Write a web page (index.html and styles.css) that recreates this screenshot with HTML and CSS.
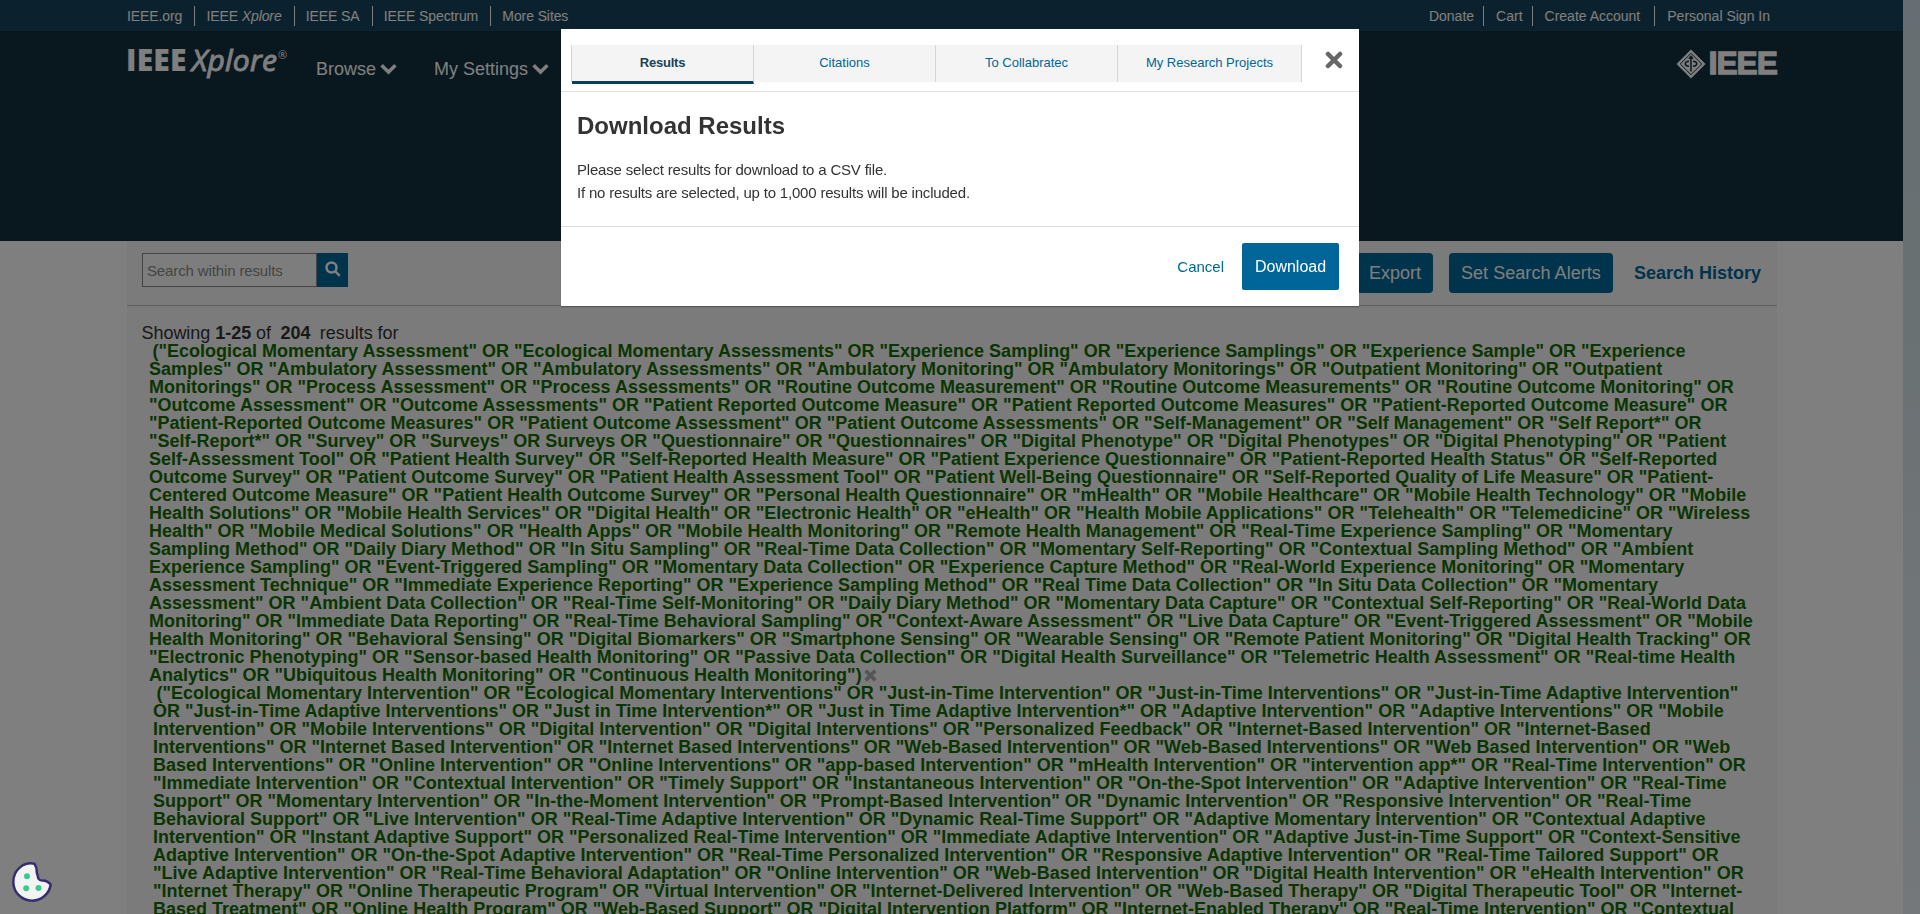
FILE: index.html
```html
<!DOCTYPE html>
<html lang="en">
<head>
<meta charset="utf-8">
<title>IEEE Xplore Search Results</title>
<link rel="stylesheet" href="styles.css">
</head>
<body>
<div class="page">
  <div class="main">
    <nav class="meta">
      <ul class="links sites">
        <li>IEEE.org</li><li>IEEE <i>Xplore</i></li><li>IEEE SA</li><li>IEEE Spectrum</li><li>More Sites</li>
      </ul>
      <ul class="links account">
        <li>Donate</li><li>Cart</li><li>Create Account</li><li>Personal Sign In</li>
      </ul>
    </nav>
    <header class="header">
      <div class="brand"><b>IEEE</b><i>Xplore</i><sup>®</sup></div>
      <div class="menu">Browse <svg viewBox="0 0 16 11"><path d="M1.500 2 8 8.300 14.500 2"/></svg></div>
      <div class="menu second">My Settings <svg viewBox="0 0 16 11"><path d="M1.500 2 8 8.300 14.500 2"/></svg></div>
      <div class="ieee">
        <svg class="diamond" viewBox="0 0 30 30"><path class="fill" d="M15 .5 29.500 15 15 29.500 .5 15Z"/><path class="line" d="M15 4.300 25.700 15 15 25.700 4.300 15Z"/><path class="mark" d="M15 8v14.500 M13 12.300c-5 .3-5 4.700 0 5 M17 12.300c5 .3 5 4.700 0 5 M13 9.800 15 7.500l2 2.300"/></svg>
        <span>IEEE</span>
      </div>
    </header>
    <main class="results">
      <div class="toolbar">
        <div class="search"><span class="field">Search within results</span><span class="go"><svg viewBox="0 0 16 16"><circle cx="6.500" cy="6.500" r="5"/><path d="m10.300 10.300 4.500 4.500"/></svg></span></div>
        <div class="actions"><span class="btn">Export</span><span class="btn">Set Search Alerts</span><b class="history">Search History</b></div>
      </div>
      <div class="summary">Showing <b>1-25</b> of <b class="count">204</b> results for</div>
      <div class="query first"> ("Ecological Momentary Assessment" OR "Ecological Momentary Assessments" OR "Experience Sampling" OR "Experience Samplings" OR "Experience Sample" OR "Experience
Samples" OR "Ambulatory Assessment" OR "Ambulatory Assessments" OR "Ambulatory Monitoring" OR "Ambulatory Monitorings" OR "Outpatient Monitoring" OR "Outpatient
Monitorings" OR "Process Assessment" OR "Process Assessments" OR "Routine Outcome Measurement" OR "Routine Outcome Measurements" OR "Routine Outcome Monitoring" OR
"Outcome Assessment" OR "Outcome Assessments" OR "Patient Reported Outcome Measure" OR "Patient Reported Outcome Measures" OR "Patient-Reported Outcome Measure" OR
"Patient-Reported Outcome Measures" OR "Patient Outcome Assessment" OR "Patient Outcome Assessments" OR "Self-Management" OR "Self Management" OR "Self Report*" OR
"Self-Report*" OR "Survey" OR "Surveys" OR Surveys OR "Questionnaire" OR "Questionnaires" OR "Digital Phenotype" OR "Digital Phenotypes" OR "Digital Phenotyping" OR "Patient
Self-Assessment Tool" OR "Patient Health Survey" OR "Self-Reported Health Measure" OR "Patient Experience Questionnaire" OR "Patient-Reported Health Status" OR "Self-Reported
Outcome Survey" OR "Patient Outcome Survey" OR "Patient Health Assessment Tool" OR "Patient Well-Being Questionnaire" OR "Self-Reported Quality of Life Measure" OR "Patient-
Centered Outcome Measure" OR "Patient Health Outcome Survey" OR "Personal Health Questionnaire" OR "mHealth" OR "Mobile Healthcare" OR "Mobile Health Technology" OR "Mobile
Health Solutions" OR "Mobile Health Services" OR "Digital Health" OR "Electronic Health" OR "eHealth" OR "Health Mobile Applications" OR "Telehealth" OR "Telemedicine" OR "Wireless
Health" OR "Mobile Medical Solutions" OR "Health Apps" OR "Mobile Health Monitoring" OR "Remote Health Management" OR "Real-Time Experience Sampling" OR "Momentary
Sampling Method" OR "Daily Diary Method" OR "In Situ Sampling" OR "Real-Time Data Collection" OR "Momentary Self-Reporting" OR "Contextual Sampling Method" OR "Ambient
Experience Sampling" OR "Event-Triggered Sampling" OR "Momentary Data Collection" OR "Experience Capture Method" OR "Real-World Experience Monitoring" OR "Momentary
Assessment Technique" OR "Immediate Experience Reporting" OR "Experience Sampling Method" OR "Real Time Data Collection" OR "In Situ Data Collection" OR "Momentary
Assessment" OR "Ambient Data Collection" OR "Real-Time Self-Monitoring" OR "Daily Diary Method" OR "Momentary Data Capture" OR "Contextual Self-Reporting" OR "Real-World Data
Monitoring" OR "Immediate Data Reporting" OR "Real-Time Behavioral Sampling" OR "Context-Aware Assessment" OR "Live Data Capture" OR "Event-Triggered Assessment" OR "Mobile
Health Monitoring" OR "Behavioral Sensing" OR "Digital Biomarkers" OR "Smartphone Sensing" OR "Wearable Sensing" OR "Remote Patient Monitoring" OR "Digital Health Tracking" OR
"Electronic Phenotyping" OR "Sensor-based Health Monitoring" OR "Passive Data Collection" OR "Digital Health Surveillance" OR "Telemetric Health Assessment" OR "Real-time Health
Analytics" OR "Ubiquitous Health Monitoring" OR "Continuous Health Monitoring")<svg class="remove" viewBox="0 0 12 12"><path d="m1.500 1.500 9 9M10.500 1.500l-9 9"/></svg></div>
      <div class="query"> ("Ecological Momentary Intervention" OR "Ecological Momentary Interventions" OR "Just-in-Time Intervention" OR "Just-in-Time Interventions" OR "Just-in-Time Adaptive Intervention"
OR "Just-in-Time Adaptive Interventions" OR "Just in Time Intervention*" OR "Just in Time Adaptive Intervention*" OR "Adaptive Intervention" OR "Adaptive Interventions" OR "Mobile
Intervention" OR "Mobile Interventions" OR "Digital Intervention" OR "Digital Interventions" OR "Personalized Feedback" OR "Internet-Based Intervention" OR "Internet-Based
Interventions" OR "Internet Based Intervention" OR "Internet Based Interventions" OR "Web-Based Intervention" OR "Web-Based Interventions" OR "Web Based Intervention" OR "Web
Based Interventions" OR "Online Intervention" OR "Online Interventions" OR "app-based Intervention" OR "mHealth Intervention" OR "intervention app*" OR "Real-Time Intervention" OR
"Immediate Intervention" OR "Contextual Intervention" OR "Timely Support" OR "Instantaneous Intervention" OR "On-the-Spot Intervention" OR "Adaptive Intervention" OR "Real-Time
Support" OR "Momentary Intervention" OR "In-the-Moment Intervention" OR "Prompt-Based Intervention" OR "Dynamic Intervention" OR "Responsive Intervention" OR "Real-Time
Behavioral Support" OR "Live Intervention" OR "Real-Time Adaptive Intervention" OR "Dynamic Real-Time Support" OR "Adaptive Momentary Intervention" OR "Contextual Adaptive
Intervention" OR "Instant Adaptive Support" OR "Personalized Real-Time Intervention" OR "Immediate Adaptive Intervention" OR "Adaptive Just-in-Time Support" OR "Context-Sensitive
Adaptive Intervention" OR "On-the-Spot Adaptive Intervention" OR "Real-Time Personalized Intervention" OR "Responsive Adaptive Intervention" OR "Real-Time Tailored Support" OR
"Live Adaptive Intervention" OR "Real-Time Behavioral Adaptation" OR "Online Intervention" OR "Web-Based Intervention" OR "Digital Health Intervention" OR "eHealth Intervention" OR
"Internet Therapy" OR "Online Therapeutic Program" OR "Virtual Intervention" OR "Internet-Delivered Intervention" OR "Web-Based Therapy" OR "Digital Therapeutic Tool" OR "Internet-
Based Treatment" OR "Online Health Program" OR "Web-Based Support" OR "Digital Intervention Platform" OR "Internet-Enabled Therapy" OR "Real-Time Intervention" OR "Contextual</div>
    </main>
  </div>
  <div class="gutter"></div>
</div>
<div class="overlay">
  <section class="modal">
    <div class="modal-head">
      <div class="tabs"><span class="tab active">Results</span><span class="tab">Citations</span><span class="tab">To Collabratec</span><span class="tab">My Research Projects</span></div>
      <svg class="close" viewBox="0 0 18 18"><path d="m3 3 12 12M15 3 3 15"/></svg>
    </div>
    <div class="modal-body">
      <h1>Download Results</h1>
      <p>Please select results for download to a CSV file.<br>If no results are selected, up to 1,000 results will be included.</p>
    </div>
    <div class="modal-foot"><span class="cancel">Cancel</span><span class="download">Download</span></div>
  </section>
</div>
<svg class="cookie" viewBox="0 0 40 40"><path class="body" d="M22.500 1.800C12 -.5 1.300 7.500 1.300 20a18.700 18.700 0 0 0 18.700 18.700c9.500 0 17.500-7 18.700-16.200-2.200-2.500-4.200-3.900-7.200-4-2.500.5-5-.8-5.500-3 .2-2.500-1.500-3.500-1.300-6 .2-3-.5-5-2.200-7.700Z"/><g class="chips"><circle cx="15" cy="14.300" r="3"/><circle cx="14.200" cy="26.300" r="3"/><circle cx="26.500" cy="26" r="3"/></g></svg>
</body>
</html>
```
FILE: styles.css
```css
* { box-sizing: border-box; }
body { margin: 0; height: 914px; overflow: hidden; font-family: "Liberation Sans", Arial, sans-serif; color: #333; }
ul, p, h1 { margin: 0; padding: 0; list-style: none; }
svg { fill: none; flex: none; }
.page { display: flex; height: 914px; overflow: hidden; }
.main { flex: 1; min-width: 0; background: #fff; }
.gutter { width: 17px; background: linear-gradient(#cfdde6, #d0e0e4 25%, #dfe9ee 60%, #e8f0f5); }
.meta { height: 31px; padding: 0 133px 0 127px; display: flex; justify-content: space-between; background: #17455c; color: #fff; font-size: 14px; }
.links { display: flex; padding-top: 6px; }
.links li { height: 20px; line-height: 20px; padding-right: 12px; margin-right: 12px; border-right: 1px solid #fff; white-space: nowrap; }
.sites { letter-spacing: -.1px; }
.sites li { margin-right: 11.200px; }
.account li { padding-right: 9px; margin-right: 12px; }
.account li:nth-child(3) { padding-right: 14px; }
.links li:last-child { border: 0; padding: 0; margin: 0; }
.header { height: 210px; padding: 0 126px 0 127px; display: flex; align-items: flex-start; background: #12303f; color: #fff; }
.brand { display: flex; width: 160px; margin: 9px 30px 0 -1px; font: 30px/40px "Open Sans", sans-serif; white-space: nowrap; }
.brand b { font-weight: 800; letter-spacing: .2px; margin-right: 5px; }
.brand i { letter-spacing: .2px; -webkit-text-stroke: .9px #fff; }
.brand sup { font-size: 11px; line-height: 30px; margin-left: 1px; }
.menu { display: flex; align-items: center; margin-top: 27px; font-size: 18px; line-height: 22px; white-space: nowrap; }
.menu svg { width: 17px; height: 12px; margin-left: 4px; stroke: #fff; stroke-width: 3.300; }
.second { margin-left: 37px; }
.ieee { display: flex; align-items: center; margin: 18px 0 0 auto; height: 30px; }
.ieee span { font: bold 31px/30px "Liberation Sans", sans-serif; letter-spacing: -.6px; -webkit-text-stroke: 1.500px #fff; }
.diamond { width: 30px; height: 30px; margin-right: 3px; }
.diamond .fill { fill: #fff; }
.diamond .line { stroke: #12303f; stroke-width: 1; }
.diamond .mark { stroke: #12303f; stroke-width: 1.500; }
.results { margin: 0 126px 0 127px; height: 673px; background: #f7f7f7; overflow: hidden; }
.toolbar { height: 65px; padding: 12px 16px 0 15px; display: flex; justify-content: space-between; border-bottom: 1px solid #bbb; }
.search { display: flex; height: 34px; }
.field { width: 175px; border: 1px solid #888; background: #fafafa; color: #8a8a8a; font-size: 15px; line-height: 34px; padding-left: 4px; letter-spacing: -.13px; }
.go { width: 31px; background: #069; padding: 8px; }
.go svg { display: block; width: 16px; height: 16px; stroke: #fff; stroke-width: 2.500; }
.actions { display: flex; align-items: flex-start; font-size: 18px; line-height: 40px; }
.btn { height: 40px; padding: 0 12px; margin-right: 16px; border-radius: 4px; background: #069; color: #fff; }
.btn:nth-child(2) { width: 164px; padding: 0; text-align: center; letter-spacing: .05px; }
.history { color: #069; margin-left: 5px; }
.summary { padding: 17px 14.500px 0; height: 36px; font-size: 18px; line-height: 20px; letter-spacing: -.04px; }
.count { margin: 0 4.500px; }
.query { white-space: pre; margin-left: 26px; color: #156b00; font-size: 18px; line-height: 18px; font-weight: bold; text-indent: -1.500px; }
.first { margin-left: 22px; }
.remove { width: 13px; height: 13px; margin-left: 2px; vertical-align: -1px; stroke: #aaa; stroke-width: 3.300; }
.overlay { position: fixed; inset: 0; background: rgba(0, 0, 0, .5); padding-top: 29px; }
.modal { width: 798px; height: 277px; margin: 0 auto; background: #fff; box-shadow: 0 1px 1px rgba(0, 0, 0, .3); }
.modal-head { display: flex; justify-content: space-between; height: 63px; padding: 16px 16px 0 10px; border-bottom: 1px solid #dedee2; }
.tabs { display: flex; width: 731px; height: 37px; border-left: 1px solid #d5d5d5; }
.tab { width: 182px; height: 37px; border-right: 1px solid #d5d5d5; background: #f4f4f4; color: #069; font-size: 13px; line-height: 35px; text-align: center; }
.tab:last-child { flex: 1; }
.active { height: 39px; border-bottom: 3px solid #0b405a; color: #1a4258; font-weight: bold; letter-spacing: -.2px; }
.close { width: 18px; height: 18px; margin-top: 6px; stroke: #666; stroke-width: 4.500; stroke-linecap: round; }
.modal-body { height: 135px; padding: 18px 16px; border-bottom: 1px solid #dedee2; }
.modal-body h1 { font-size: 24px; line-height: 32px; }
.modal-body p { margin-top: 16px; font-size: 15px; line-height: 23px; letter-spacing: -.19px; }
.modal-foot { display: flex; justify-content: flex-end; align-items: center; padding: 16px 20px 0; }
.cancel { color: #069; font-size: 15px; margin-right: 18px; }
.download { width: 97px; height: 47px; border-radius: 2px; background: #069; color: #fff; font-size: 16px; line-height: 47px; text-align: center; }
.cookie { position: fixed; left: 12px; top: 862px; width: 40px; height: 40px; }
.cookie .body { fill: #f3f3f3; stroke: #352f70; stroke-width: 2.500; }
.chips { fill: #3cc88f; }
```
